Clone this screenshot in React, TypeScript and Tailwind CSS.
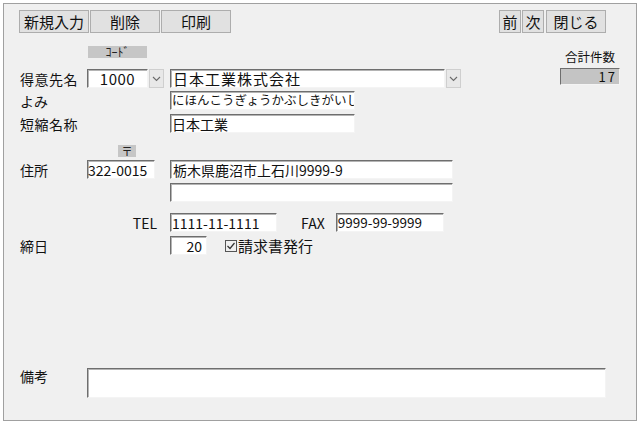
import React from 'react'

const sunken =
  'bg-white border border-t-[#6e6e6e] border-l-[#6e6e6e] border-r-[#f4f4f4] border-b-[#f4f4f4] shadow-[inset_1px_1px_0_#b4b4b4]'
const btn = 'h-[23px] flex items-center justify-center border border-[#adadad] bg-[#e1e1e1] text-[15px] leading-none'
const tag = 'flex items-center justify-center bg-[#c6c6c6] leading-none text-[#222]'

function Chevron() {
  return (
    <svg width="9" height="6" viewBox="0 0 9 6">
      <polyline points="1,1 4.5,4.5 8,1" fill="none" stroke="#6a6a6a" strokeWidth="1.1" />
    </svg>
  )
}

function Combo({ value, className, textClass }: { value: string; className: string; textClass: string }) {
  return (
    <div className={`flex h-full items-stretch ${className}`}>
      <div className={`flex flex-1 items-center overflow-hidden whitespace-nowrap leading-none ${sunken} ${textClass}`}>
        {value}
      </div>
      <div className="ml-px flex w-[15px] items-center justify-center border border-[#cfcfcf] bg-[#e8e8e8]">
        <Chevron />
      </div>
    </div>
  )
}

function Field({ value, className }: { value?: string; className: string }) {
  return (
    <div className={`flex h-full items-center overflow-hidden whitespace-nowrap leading-none ${sunken} ${className}`}>
      {value}
    </div>
  )
}

export default function App() {
  return (
    <div className="h-[424px] w-[640px] bg-white pl-[3px] pt-[3px] font-['Noto_Sans_CJK_JP',sans-serif] text-[#111]">
      <div className="h-[418px] w-[634px] border border-[#a0a0a0] bg-[#f0f0f0] pl-[16px]">
        {/* toolbar */}
        <div className="flex justify-between pr-[30px] pt-[6px]">
          <div className="-ml-px flex gap-px">
            <button className={`${btn} w-[70px]`}>新規入力</button>
            <button className={`${btn} w-[70px]`}>削除</button>
            <button className={`${btn} w-[70px]`}>印刷</button>
          </div>
          <div className="flex gap-px">
            <button className={`${btn} w-[22px]`}>前</button>
            <button className={`${btn} w-[22px]`}>次</button>
            <button className={`${btn} ml-px w-[60px]`}>閉じる</button>
          </div>
        </div>

        {/* customer row + total */}
        <div className="mt-[13px] flex items-end justify-between pr-[16px]">
          <div>
            <div className={`${tag} ml-[68px] h-[12px] w-[59px] text-[12px]`}>ｺｰﾄﾞ</div>
            <div className="mt-[11px] flex h-[19px] items-center">
              <span className="w-[67px] text-[14px] leading-none tracking-[0.5px]">得意先名</span>
              <Combo value="1000" className="w-[77px]" textClass="justify-center text-[15px] tracking-[0.5px]" />
              <Combo
                value="日本工業株式会社"
                className="ml-[6px] w-[291px]"
                textClass="pl-[2px] text-[15px] tracking-[1px]"
              />
            </div>
          </div>
          <div className="flex flex-col items-end pb-[3px]">
            <span className="mb-[5px] pr-[5px] text-[12.5px] leading-none">合計件数</span>
            <div className="flex h-[17px] w-[60px] items-center justify-end border border-t-[#6e6e6e] border-l-[#6e6e6e] border-r-[#f4f4f4] border-b-[#f4f4f4] bg-[#c4c4c4] pr-[2px] text-[13px] leading-none tracking-[2px]">
              17
            </div>
          </div>
        </div>

        {/* yomi */}
        <div className="mt-[3px] flex h-[19px] items-center">
          <span className="w-[150px] text-[14px] leading-none">よみ</span>
          <Field value="にほんこうぎょうかぶしきがいし" className="w-[185px] pl-[1px] text-[12.5px]" />
        </div>

        {/* short name */}
        <div className="mt-[4px] flex h-[19px] items-center">
          <span className="w-[150px] text-[14px] leading-none tracking-[0.5px]">短縮名称</span>
          <Field value="日本工業" className="w-[185px] pl-[1px] text-[14px]" />
        </div>

        {/* postal tag */}
        <div className={`${tag} ml-[98px] mt-[12px] h-[12px] w-[18px] text-[11px]`}>〒</div>

        {/* address */}
        <div className="mt-[3px] flex h-[19px] items-center">
          <span className="w-[67px] text-[14px] leading-none">住所</span>
          <Field value="322-0015" className="w-[68px] text-[14px]" />
          <Field value="栃木県鹿沼市上石川9999-9" className="ml-[15px] w-[283px] pl-[2px] text-[14px]" />
        </div>
        <div className="mt-[4px] flex h-[19px] items-center">
          <Field className="ml-[150px] w-[283px]" />
        </div>

        {/* tel / fax */}
        <div className="mt-[11px] flex h-[19px] items-center text-[14px]">
          <span className="w-[137px] text-right leading-none">TEL</span>
          <Field value="1111-11-1111" className="ml-[13px] w-[107px] pl-[1px]" />
          <span className="ml-[24px] leading-none">FAX</span>
          <Field value="9999-99-9999" className="ml-[11px] w-[108px] pl-[1px] text-[13.5px]" />
        </div>

        {/* closing day */}
        <div className="mt-[4px] flex h-[19px] items-center">
          <span className="w-[150px] text-[14px] leading-none">締日</span>
          <Field value="20" className="w-[37px] justify-end pr-[4px] text-[14px]" />
          <svg className="ml-[18px]" width="12" height="12" viewBox="0 0 12 12">
            <rect x="0.5" y="0.5" width="11" height="11" fill="none" stroke="#555" />
            <polyline points="2.5,6 5,8.5 9.5,3" fill="none" stroke="#333" strokeWidth="1.2" />
          </svg>
          <span className="ml-[1px] text-[15px] leading-none">請求書発行</span>
        </div>

        {/* note */}
        <div className="mt-[113px] flex h-[30px] items-start">
          <span className="w-[67px] pt-[1px] text-[14px] leading-none">備考</span>
          <Field className="w-[519px]" />
        </div>
      </div>
    </div>
  )
}
